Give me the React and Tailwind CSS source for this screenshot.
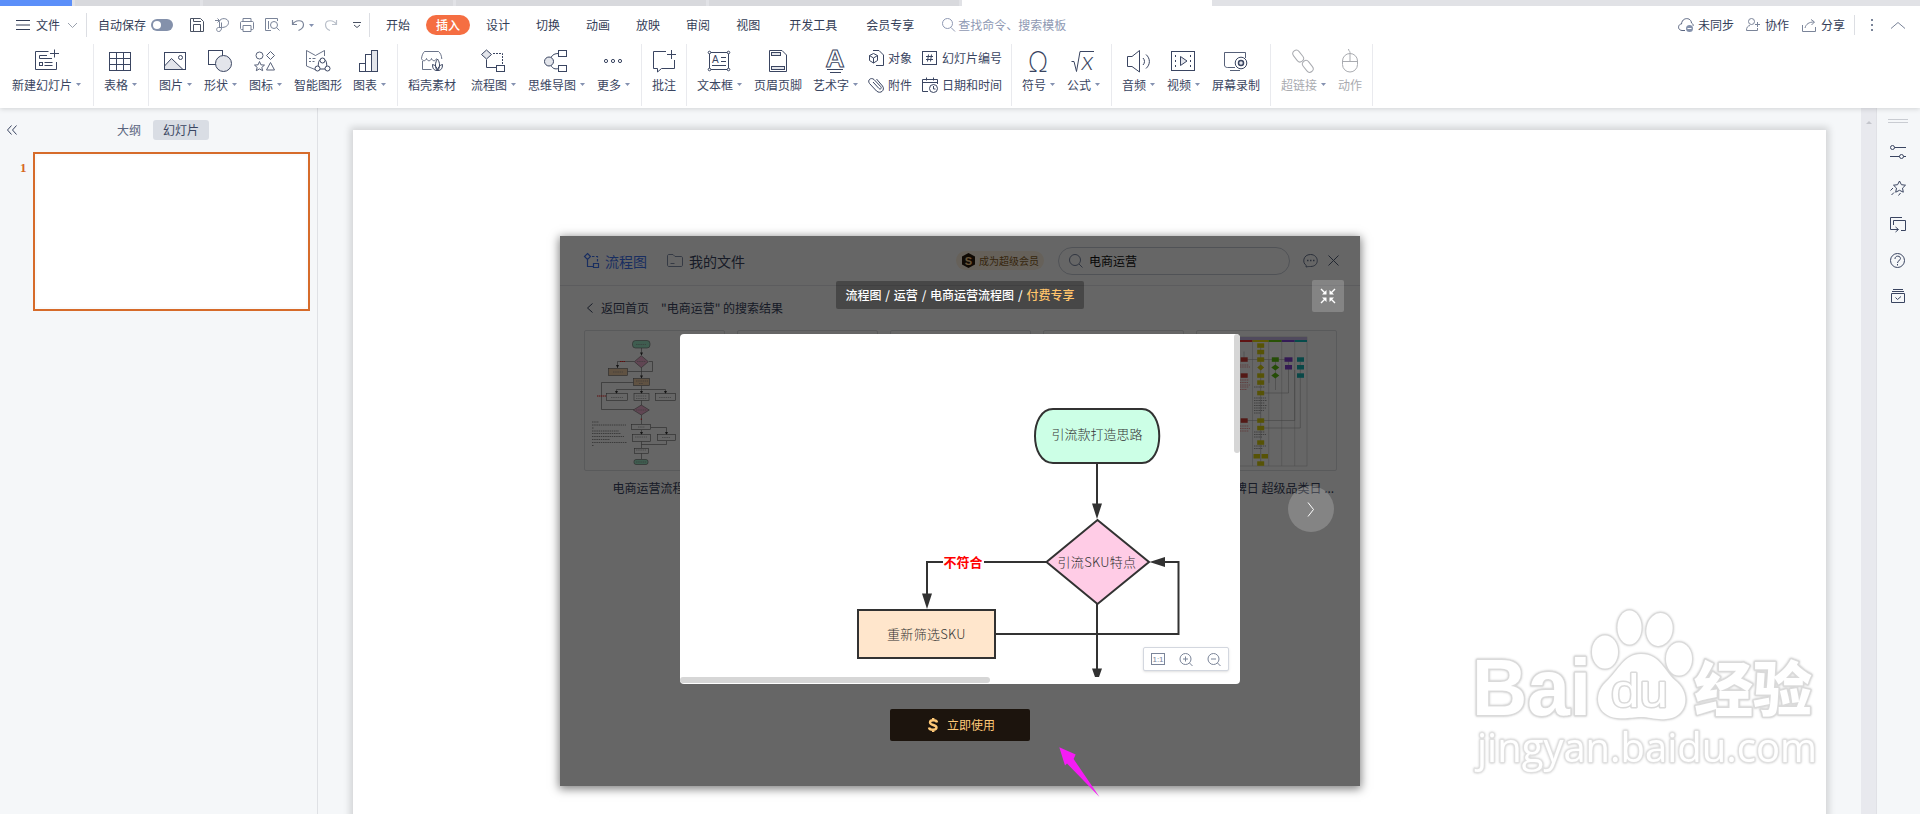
import clsx from "clsx";

const FONT = "font-['Noto_Sans_CJK_SC',sans-serif]";

const Svg = ({ w = 24, h = 24, className, children }) => (
  <svg
    width={w}
    height={h}
    viewBox={`0 0 ${w} ${h}`}
    fill="none"
    stroke="currentColor"
    strokeWidth="1"
    className={clsx("shrink-0 overflow-visible", className)}
  >
    {children}
  </svg>
);

const Caret = ({ className }) => (
  <Svg w={5} h={3} className={clsx("text-[#8491b0]", className)}>
    <path d="M0 0h5L2.500 3z" fill="currentColor" stroke="none" />
  </Svg>
);

const TABS = [
  "w-[72px] bg-[#5b8ff9]",
  "ml-[3px] w-[125px] bg-[#d8d9dd]",
  "ml-[3px] w-[250px] bg-[#d8d9dd]",
  "ml-[3px] w-[250px] bg-[#d8d9dd]",
  "ml-[3px] w-[250px] bg-[#d8d9dd]",
  "ml-[3px] w-[250px] bg-white",
];

const MENUS = [
  { label: "设计", gap: "ml-[16px]" },
  { label: "切换", gap: "ml-[26px]" },
  { label: "动画", gap: "ml-[26px]" },
  { label: "放映", gap: "ml-[26px]" },
  { label: "审阅", gap: "ml-[26px]" },
  { label: "视图", gap: "ml-[26px]" },
  { label: "开发工具", gap: "ml-[29px]" },
  { label: "会员专享", gap: "ml-[29px]" },
];

const SHADE = "#e3e5eb";

const icons = {
  newSlide: (
    <>
      <path d="M14.500 2.500H1.500V20.500H22.500V13M20.500 0.500v8M16 4.500h9M13 6.500H5.500V9.500H18M10.500 13.500h8M10.500 16.500h8" />
      <rect x="5.500" y="13.500" width="3" height="3" />
    </>
  ),
  table: (
    <>
      <rect x="1.500" y="3.500" width="21" height="18" />
      <path d="M1.500 9.500h21M1.500 15.500h21M8.500 3.500v18M15.500 3.500v18" />
    </>
  ),
  image: (
    <>
      <path d="M1.500 17L8.500 9.500L20 20.500H1.500z" fill={SHADE} />
      <rect x="1.500" y="3.500" width="21" height="17" />
      <circle cx="17.500" cy="8.500" r="2" />
    </>
  ),
  shapes: (
    <>
      <rect x="0.500" y="1.500" width="14" height="14" />
      <circle cx="15.500" cy="14.500" r="8" fill={SHADE} />
    </>
  ),
  glyphs: (
    <g opacity=".85">
      <circle cx="6.500" cy="6.500" r="3.500" />
      <path d="M17.500 2.500l4 4-4 4-4-4z" />
      <path d="M6.500 12.500l1.400 3.300 3.600.3-2.700 2.300.9 3.300-3.200-1.800-3.200 1.800.9-3.300-2.700-2.300 3.600-.3z" />
      <path d="M17.500 13.500l4 7.500h-8z" />
    </g>
  ),
  smart: (
    <>
      <path d="M9 20.500L0.500 17V1.500L9.500 6.500L18.500 1.500V7" opacity=".75" />
      <path d="M3 9.500h2M6.500 9.500h3M3 12.500h2M6.500 12.500h2" opacity=".75" />
      <path d="M12.500 18c-.5-4 0-7.500 4-8.500c4 1 4.500 4.500 4 8.500M13.500 20h6" />
      <circle cx="16.500" cy="11.500" r="2.500" fill="white" />
      <circle cx="11.500" cy="19.500" r="2.500" fill="white" />
      <circle cx="21.500" cy="19.500" r="2.500" fill="white" />
    </>
  ),
  chart: (
    <>
      <rect x="2.500" y="14.500" width="6" height="8" />
      <rect x="8.500" y="5.500" width="6" height="17" />
      <rect x="14.500" y="1.500" width="6" height="21" fill={SHADE} />
    </>
  ),
  shop: (
    <>
      <path
        d="M1.500 9.500C2 6 3 4 4.500 2.500H18.500C20.500 4 21.500 6.500 21.800 10M1.500 9.500c1 3 4 3 5 0c1 3 4 3 5 0c1 3 4 3 5 0M2.500 12v8.500h9"
        opacity=".75"
      />
      <path
        d="M17.500 21.500c-3-3-2.500-8 0-11.500c2.500 3.500 3 8.500 0 11.500zM17 21.500c-3 0-4.500-2-4.500-6c2.500.5 4.500 2.500 5 6zM18 21.500c3 0 4.500-2 4.500-6c-2.500.5-4.500 2.500-5 6z"
        fill="white"
      />
    </>
  ),
  flow: (
    <>
      <path d="M5.500 10.500V18.500H15.500" />
      <path d="M5.500 1l5 4.500-5 4.500-5-4.500z" fill={SHADE} />
      <path d="M12 4.500h9.500V16" strokeDasharray="2 1" />
      <rect x="15.500" y="16.500" width="8" height="6" />
    </>
  ),
  mind: (
    <>
      <path d="M7 8.500C8.500 5.500 11 4.500 14.500 4.500M7 16.500C8.500 19.500 11 20.500 14.500 19.500" />
      <circle cx="5" cy="12.500" r="4.500" fill={SHADE} />
      <rect x="14.500" y="1.500" width="8" height="6" />
      <rect x="14.500" y="16.500" width="8" height="6" />
    </>
  ),
  more: (
    <>
      <circle cx="5" cy="12" r="1.600" />
      <circle cx="12" cy="12" r="1.600" />
      <circle cx="19" cy="12" r="1.600" />
    </>
  ),
  comment: (
    <path d="M14 2.500H1.500V19.500H5.500V23L9.500 19.500H22.500V11M19.500 1v9M15 5.500h9" />
  ),
  textBox: (
    <>
      <rect x="2.500" y="3.500" width="19" height="17" />
      <g fill="white">
        <circle cx="2.500" cy="3.500" r="1.300" />
        <circle cx="21.500" cy="3.500" r="1.300" />
        <circle cx="2.500" cy="20.500" r="1.300" />
        <circle cx="21.500" cy="20.500" r="1.300" />
      </g>
      <path d="M14 8.500h5M14 12.500h5M5 16.500h14" />
      <text x="5" y="14" fontSize="10" fill="currentColor" stroke="none" className="font-['Liberation_Sans',sans-serif]">
        A
      </text>
    </>
  ),
  header: (
    <>
      <path d="M3.500 1.500H16L20.500 6V22.500H3.500z" />
      <rect x="5.500" y="3.500" width="9" height="3" fill={SHADE} />
      <rect x="5.500" y="17.500" width="13" height="3" fill={SHADE} />
    </>
  ),
  wordArt: (
    <>
      <text
        x="2.500"
        y="17.500"
        fontSize="23"
        strokeWidth=".9"
        textLength="19"
        lengthAdjust="spacingAndGlyphs"
        className="font-['Liberation_Sans',sans-serif] font-bold"
      >
        A
      </text>
      <path d="M4 20.500h16M7 23.500h11" />
    </>
  ),
  omega: (
    <text
      x="2"
      y="22.500"
      fontSize="29"
      fill="currentColor"
      stroke="none"
      textLength="20"
      lengthAdjust="spacingAndGlyphs"
      className="font-['Lato',sans-serif] font-light"
    >
      Ω
    </text>
  ),
  formula: (
    <>
      <path d="M0.500 12.500H3L5.500 22.500L9 2.500H23" />
      <text
        x="10.500"
        y="21"
        fontSize="25"
        fill="currentColor"
        stroke="none"
        textLength="12"
        lengthAdjust="spacingAndGlyphs"
        className="font-['Lato',sans-serif] font-light italic"
      >
        x
      </text>
    </>
  ),
  audio: (
    <path d="M1.500 7.500H6L13.500 1.500V23L6 17.500H1.500zM17 9c2 2 2 5 0 7M20 5.500c4.500 4 4.500 10 0 14" />
  ),
  video: (
    <>
      <rect x="0.500" y="2.500" width="23" height="19" />
      <path d="M9.500 7.500L16 12L9.500 16.500z" fill={SHADE} />
      <path d="M4.500 6v13M19.500 6v13" strokeDasharray="2 3" />
    </>
  ),
  record: (
    <>
      <path d="M11 18.500H3.500C1.500 18.500 0.500 17.500 0.500 16V3.500H21.500V9M6 21.500h10" opacity=".85" />
      <circle cx="17" cy="14" r="5.800" fill="white" />
      <circle cx="17" cy="14" r="2.500" fill={SHADE} strokeWidth="1.500" />
    </>
  ),
  link: (
    <>
      <rect x="-3" y="-6" width="7" height="13" rx="3.500" transform="translate(6.500 7) rotate(-38)" />
      <rect x="-3.500" y="-6" width="7" height="13" rx="3.500" transform="translate(16.500 17) rotate(-38)" />
    </>
  ),
  mouse: (
    <>
      <rect x="4.500" y="4.500" width="15" height="18.500" rx="7.500" />
      <path d="M4.500 12.500h15M12 12.500V3.500C12 2 10.500 2 10.500 0" />
    </>
  ),
};

// pad = left margin of every button, so the labels keep their uneven rhythm
const GROUPS = [
  { box: "w-[94px]", items: [{ icon: "newSlide", label: "新建幻灯片", caret: true, pad: "ml-[12px]" }] },
  { box: "w-[55px]", items: [{ icon: "table", label: "表格", caret: true, pad: "ml-[10px]" }] },
  {
    box: "w-[249px]",
    items: [
      { icon: "image", label: "图片", caret: true, pad: "ml-[10px]" },
      { icon: "shapes", label: "形状", caret: true, pad: "ml-[13px]" },
      { icon: "glyphs", label: "图标", caret: true, pad: "ml-[13px]" },
      { icon: "smart", label: "智能图形", pad: "ml-[13px]" },
      { icon: "chart", label: "图表", caret: true, pad: "ml-[11px]" },
    ],
  },
  {
    box: "w-[244px]",
    items: [
      { icon: "shop", label: "稻壳素材", pad: "ml-[10px]" },
      { icon: "flow", label: "流程图", caret: true, pad: "ml-[15px]" },
      { icon: "mind", label: "思维导图", caret: true, pad: "ml-[13px]" },
      { icon: "more", label: "更多", caret: true, pad: "ml-[13px]" },
    ],
  },
  { box: "w-[45px]", items: [{ icon: "comment", label: "批注", pad: "ml-[10px]" }] },
];

const GROUPS_TEXT = [
  { icon: "textBox", label: "文本框", caret: true, pad: "ml-[10px]" },
  { icon: "header", label: "页眉页脚", pad: "ml-[13px]" },
  { icon: "wordArt", label: "艺术字", caret: true, pad: "ml-[11px]" },
];

const GROUPS_RIGHT = [
  {
    box: "w-[100px]",
    items: [
      { icon: "omega", label: "符号", caret: true, pad: "ml-[10px]" },
      { icon: "formula", label: "公式", caret: true, pad: "ml-[13px]" },
    ],
  },
  {
    box: "w-[159px]",
    items: [
      { icon: "audio", label: "音频", caret: true, pad: "ml-[10px]" },
      { icon: "video", label: "视频", caret: true, pad: "ml-[13px]" },
      { icon: "record", label: "屏幕录制", pad: "ml-[13px]" },
    ],
  },
  {
    box: "w-[102px]",
    items: [
      { icon: "link", label: "超链接", caret: true, pad: "ml-[10px]", off: true },
      { icon: "mouse", label: "动作", pad: "ml-[13px]", off: true },
    ],
  },
];

const RibbonItem = ({ item }) => (
  <button
    className={clsx(
      "flex shrink-0 flex-col items-center",
      item.pad,
      item.off ? "text-[#a9abb0]" : "text-[#3a4561]",
    )}
  >
    <Svg>{icons[item.icon]}</Svg>
    <span className="mt-[3px] flex items-center whitespace-nowrap leading-[18px]">
      {item.label}
      {item.caret && <Caret className="-mr-px mb-[2px] ml-[4px]" />}
    </span>
  </button>
);

const RibbonGroup = ({ box, children }) => (
  <div className={clsx("flex h-[62px] shrink-0 border-r border-[#e9eaee] pt-[5px]", box)}>
    {children}
  </div>
);

const SmallItem = ({ icon, label }) => (
  <span className="flex items-center gap-[4px] whitespace-nowrap leading-[18px]">
    <Svg w={16} h={16}>{icon}</Svg>
    {label}
  </span>
);

const Ribbon = () => (
  <div className="flex h-[64px] items-start text-[12px] text-[#3a4561]">
    {GROUPS.map((g, i) => (
      <RibbonGroup key={i} box={g.box}>
        {g.items.map((it) => (
          <RibbonItem key={it.label} item={it} />
        ))}
      </RibbonGroup>
    ))}
    <RibbonGroup box="w-[325px]">
      {GROUPS_TEXT.map((it) => (
        <RibbonItem key={it.label} item={it} />
      ))}
      <div className="ml-[11px] grid h-[45px] grid-cols-[54px_auto] content-between">
        <SmallItem
          label="对象"
          icon={
            <>
              <path d="M5 0.500H11L15.500 5V15.500H8" />
              <path d="M5.500 3.500l4 2v5l-4 2.500-4-2.500v-5zM1.500 5.500l4 2.500 4-2.500M5.500 8v5" />
            </>
          }
        />
        <SmallItem
          label="幻灯片编号"
          icon={
            <>
              <rect x="0.500" y="1.500" width="14" height="13" />
              <path d="M6.500 4.500l-1 7M9.500 4.500l-1 7M4 6.500h7M4 9.500h7" />
            </>
          }
        />
        <SmallItem
          label="附件"
          icon={
            <path d="M5 5l6 6.500c1.500 1.500 3-.5 1.800-1.800L6 2.500C3 0 -1 3 1.500 6.500l7 7.500c4 3.500 9-1 6-5L8.500 2" />
          }
        />
        <SmallItem
          label="日期和时间"
          icon={
            <>
              <path d="M6 14.500H0.500V2.500H15.500V7M0.500 5.500h15M4.500 0.500v3M11.500 0.500v3" />
              <circle cx="11.500" cy="11.500" r="4" />
              <path d="M11.500 9v3h2" />
            </>
          }
        />
      </div>
    </RibbonGroup>
    {GROUPS_RIGHT.map((g, i) => (
      <RibbonGroup key={i} box={g.box}>
        {g.items.map((it) => (
          <RibbonItem key={it.label} item={it} />
        ))}
      </RibbonGroup>
    ))}
  </div>
);

const MenuBar = () => (
  <div className="flex h-[38px] items-center whitespace-nowrap text-[12px] leading-[18px] text-[#333d57]">
    <Svg w={14} h={10} className="ml-[16px]">
      <path d="M0 .5h14M0 5h14M0 9.500h14" />
    </Svg>
    <span className="ml-[6px]">文件</span>
    <Svg w={9} h={5} className="ml-[8px] text-[#9aa1ad]">
      <path d="M0 0l4.500 4.500L9 0" />
    </Svg>
    <span className="ml-[9px] h-[24px] w-px bg-[#dcdee3]" />
    <span className="ml-[11px]">自动保存</span>
    <span className="ml-[5px] flex h-[12px] w-[22px] items-center rounded-full bg-[#8491ab] pl-[2px]">
      <span className="h-[8px] w-[8px] rounded-full bg-white" />
    </span>
    <Svg w={14} h={14} className="ml-[17px] text-[#4a5263]">
      <path d="M0.500 0.500H10.500L13.500 3.500V13.500H0.500zM3.500 13.500V6.500H10.500V13.500M3.500 0.500V3.500H11" />
    </Svg>
    <Svg w={14} h={14} className="ml-[11px] text-[#7a8499]">
      <path d="M0 2.500h4.500M2.500 .5l2 2-2 2M4.500 9.500V3.500C5 -.5 13.500 -.5 13.500 4.500C13.500 8 10 9.500 6.500 9.500H3.500c-2.500 0-2.500 4 0 4s3-2 3-4V4.500" />
    </Svg>
    <Svg w={14} h={14} className="ml-[11px] text-[#7a8499]">
      <path d="M3 3.500V0.500h8v3M3 11.500H1.500c-1 0-1-1-1-1V4.500c0-1 1-1 1-1h11c1 0 1 1 1 1v6c0 1-1 1-1 1H11M3 7.500h8v6H3z" />
    </Svg>
    <Svg w={15} h={14} className="ml-[11px] text-[#7a8499]">
      <path d="M6 12.500H0.500V0.500H12.500V3M3.500 3v8" />
      <circle cx="9" cy="7" r="3.500" />
      <path d="M11.500 9.500l3 3" />
    </Svg>
    <Svg w={12} h={12} className="ml-[12px] text-[#7a8499]">
      <path d="M0.500 1v4.500H5M0.500 5.500C3 1 11 0 11.500 5.500C11.500 8.500 9 10.500 6.500 11.500" strokeWidth="1.200" />
    </Svg>
    <Caret className="ml-[5px]" />
    <Svg w={12} h={12} className="ml-[11px] text-[#b9bfc9]">
      <path d="M11.500 1v4.500H7M11.500 5.500C9 1 1 0 .5 5.500C.5 8.500 2 10.500 5 11.500" strokeWidth="1.200" />
    </Svg>
    <Svg w={8} h={6} className="ml-[16px] text-[#4a5263]">
      <path d="M0 .5h8M1 3l3 2.500L7 3" />
    </Svg>
    <span className="ml-[8px] h-[24px] w-px bg-[#dcdee3]" />
    <span className="ml-[16px]">开始</span>
    <span className="ml-[16px] flex h-[20px] w-[44px] items-center justify-center rounded-full bg-[#f56e42] font-medium text-white">
      插入
    </span>
    {MENUS.map((m) => (
      <span key={m.label} className={m.gap}>
        {m.label}
      </span>
    ))}
    <Svg w={14} h={14} className="ml-[28px] text-[#8f99b3]">
      <circle cx="5.500" cy="5.500" r="5" />
      <path d="M9 9.500l4 4" />
    </Svg>
    <span className="ml-[2px] text-[#8f99b3]">查找命令、搜索模板</span>
    <div className="ml-auto flex items-center">
      <Svg w={16} h={14} className="text-[#5a6580]">
        <path d="M7 12.500H4C-1 12 0 6 3.500 6C4 -1 13 -1 13.500 5C15 6 15.500 7 15 8" />
        <circle cx="11.500" cy="10.500" r="3.500" fill="#8491ab" stroke="none" />
        <path d="M9.500 10.500h4" stroke="white" />
      </Svg>
      <span className="ml-[4px]">未同步</span>
      <Svg w={14} h={14} className="ml-[12px] text-[#7a8499]">
        <circle cx="5.500" cy="3.500" r="3" />
        <path d="M4 7.500C1.500 8 .5 9.500 .5 12.500H11.500V10M9 6.500h5M11.500 4v5" />
      </Svg>
      <span className="ml-[5px]">协作</span>
      <Svg w={14} h={13} className="ml-[13px] text-[#7a8499]">
        <path d="M0.500 6V12.500H13.500V8M3 9C4 5 7 3 12 3M9 0.500L12.500 3L9.500 6" />
      </Svg>
      <span className="ml-[5px]">分享</span>
      <span className="ml-[9px] h-[20px] w-px bg-[#dcdee3]" />
      <Svg w={2} h={12} className="ml-[16px] text-[#7a8499]">
        <path d="M1 0v12" strokeWidth="2" strokeDasharray="2 3" />
      </Svg>
      <Svg w={14} h={7} className="ml-[18px] mr-[15px] text-[#7a8499]">
        <path d="M0 6.500l7-6 7 6" />
      </Svg>
    </div>
  </div>
);

const SlidePanel = () => (
  <aside className="flex w-[318px] shrink-0 flex-col border-r border-[#dfe1e5] bg-[#f5f7f9]">
    <div className="mt-[12px] flex h-[20px] items-center text-[12px] leading-[18px] text-[#3a4561]">
      <Svg w={10} h={10} className="ml-[7px]">
        <path d="M4.500 .5L.5 5l4 4.500M9.500 .5L5.500 5l4 4.500" />
      </Svg>
      <span className="ml-[100px] text-[#5a6580]">大纲</span>
      <span className="ml-[12px] flex h-[20px] w-[56px] items-center justify-center rounded-[3px] bg-[#d9dde4]">
        幻灯片
      </span>
    </div>
    <div className="mt-[12px] flex">
      <span className="mt-[8px] w-[33px] pl-[20px] font-['Liberation_Serif',serif] text-[13px] font-bold leading-[16px] text-[#d6681e]">
        1
      </span>
      <div className="h-[159px] w-[277px] border-2 border-[#d66b2a] bg-[#fafbfc] p-[2px]">
        <div className="h-full w-full bg-white" />
      </div>
    </div>
  </aside>
);

const FlowThumb = () => (
  <svg width="139" height="139" viewBox="1 1 139 139" fill="none" stroke="#666" strokeWidth=".6">
    <path d="M57.500 18v7M57.500 37v11M57.500 56v8M57.500 70v6M57.500 85v9M57.500 100v5M57.500 111v7M57.500 123v6M50 31.500H33.500V38M43.500 41.500H68.500V31.500H65M49.500 52.500H17.500V79.500H50M32.500 64V59.500H81.500V64M67 97.500h15.500v7M82.500 111v3.500H57.500" />
    <path d="M56 22.500h3l-1.500 3zM56 45.500h3l-1.500 3zM56 61h3l-1.500 3zM31 61h3l-1.500 3zM80 61h3l-1.500 3zM32 35h3l-1.500 3zM56 102h3l-1.500 3zM81 102h3l-1.500 3z" fill="#333" stroke="none" />
    <rect x="48.500" y="10.500" width="17.500" height="7.500" rx="3" fill="#9fe8c8" />
    <path d="M57.300 25.700l7 6-7 6-7-6z" fill="#f0b0d0" />
    <rect x="24.500" y="38.500" width="19" height="7" fill="#f0cca5" />
    <rect x="49.500" y="48.500" width="16" height="7" fill="#f0cca5" />
    <g fill="white">
      <rect x="22.500" y="63.500" width="21" height="7" />
      <rect x="50" y="63.500" width="15" height="7" />
      <rect x="71.500" y="63.500" width="20" height="7" />
      <rect x="47.500" y="94.500" width="19" height="5" />
      <rect x="48.500" y="104.500" width="18" height="7" />
      <rect x="73.500" y="104.500" width="18" height="6" />
      <rect x="50.500" y="118.500" width="14" height="5" />
    </g>
    <path d="M57.300 75l8 5-8 5-8-5z" fill="#f0b0d0" />
    <rect x="50" y="129.500" width="14" height="5" rx="2" fill="#9fe8c8" />
    <path d="M36 31.500h5M13 66h9M57.300 88.500v2" stroke="#e22" strokeWidth="1" strokeDasharray="1.500 .5" />
    <g strokeDasharray="1.500 .7" stroke="#888">
      <path d="M52 14.500h10M53 31.500h9M29 42h10M52 51h12M55 53.500h4M27 67.500h12M52 66h11M52 68.500h11M75 67.500h12M52 80h11M54 97h7M51 107h12M78 107.500h8M52 120h10M52 132h10" />
      <path d="M8 92h7M8 95h34M8 98h2M8 101h27M8 103.500h29M8 106.500h32M8 109.500h18M8 112.500h35M8 115.500h2" strokeWidth=".9" />
    </g>
  </svg>
);

const SWIM_YELLOW = [15.5, 22, 29.5, 45.5, 52.5, 63, 90.5, 98, 112.5, 133.5];

const SwimThumb = () => (
  <svg width="139" height="139" viewBox="1 1 139 139" fill="none" stroke="#bbb" strokeWidth=".5">
    <rect x="30" y="7" width="81" height="129" />
    <path d="M56.500 10v126M72.700 10v126M85.700 10v126M98.700 10v126" />
    <path
      d="M64.700 15v118M48 29.500h16M64.700 29.500h30M48 21.500v8M79.500 30v30M92.500 30v33H65M104.300 32v66H65M98.700 40v50.500H50M73 53V30"
      stroke="#999"
    />
    <g stroke="none">
      <rect x="30" y="7" width="81" height="3" fill="#c9b8e8" />
      <rect x="30" y="10" width="26.500" height="2" fill="#e33" />
      <rect x="56.500" y="10" width="16.200" height="2" fill="#e8dc10" />
      <rect x="72.700" y="10" width="13" height="2" fill="#6c1" />
      <rect x="85.700" y="10" width="13" height="2" fill="#8344d8" />
      <rect x="98.700" y="10" width="12.300" height="2" fill="#1bb" />
      <g fill="#d9d010">
        {SWIM_YELLOW.map((y) => (
          <rect key={y} x="61.200" y={y - 2.2} width="7" height="4.500" />
        ))}
        <path d="M64.700 34.500l3.500 3-3.500 3-3.500-3z" />
        <rect x="57.500" y="124" width="6.500" height="4.500" />
        <rect x="65.500" y="124" width="6.500" height="4.500" />
      </g>
      <g fill="#cf3f38">
        <rect x="44.700" y="27.300" width="7" height="4.500" />
        <rect x="44.700" y="43.300" width="7" height="4.500" />
        <rect x="44.700" y="88.300" width="7" height="4.500" />
      </g>
      <g fill="#5cc010">
        <rect x="75.800" y="27.300" width="7" height="4.500" />
        <path d="M79.300 34.500l4 3-4 3-4-3zM79.300 42.500l4 3-4 3-4-3z" />
      </g>
      <g fill="#7f3fd0">
        <rect x="88.500" y="27.300" width="8" height="4.500" />
        <rect x="89" y="35" width="7" height="4.500" />
      </g>
      <g fill="#18b4b4">
        <rect x="101" y="27.300" width="7" height="4.500" />
        <rect x="101" y="35" width="7" height="4.500" />
        <rect x="101" y="43.300" width="7" height="4.500" />
      </g>
    </g>
    <g strokeWidth=".8" strokeDasharray="1.500 .7">
      <path d="M44 35h9M44 37h10M44 50h9M44 52.500h8M44 55h10M44 57h9M44 59.500h7M44 96h9M44 98.500h10M44 101h9" stroke="#e88" />
      <path
        d="M58 57h11M58 68h12M58 70.500h13M58 73h11M58 75.500h13M58 78h12M58 80.500h10M58 83h7M58 102h11M58 104.500h12M58 107h8M58 116h12M58 118.500h9"
        stroke="#888"
      />
    </g>
  </svg>
);

const LIBRARY = [
  { title: "电商运营流程图", thumb: <FlowThumb /> },
  { title: "" },
  { title: "" },
  { title: "" },
  { title: "超级品牌日 超级品类日 ...", thumb: <SwimThumb /> },
];

const Library = () => (
  <div className="flex h-full flex-col bg-white text-[12px] leading-[18px] text-[#3a4561]">
    <div className="flex h-[50px] items-center border-b border-[#e6e7ea] whitespace-nowrap">
      <Svg w={15} h={15} className="ml-[24px] text-[#3f73f0]">
        <path d="M3.500 .5l3 3-3 3-3-3zM3.500 6.500V13.500H9.500M9.500 10.500h5v4h-5z" strokeWidth="1.200" />
        <path d="M8 3.500h5.500V9" strokeWidth="1.200" strokeDasharray="2.500 1.500" />
      </Svg>
      <span className="ml-[6px] text-[14px] text-[#3f73f0]">流程图</span>
      <Svg w={16} h={13} className="ml-[20px] text-[#8491ab]">
        <path d="M0.500 2c0-1 .5-1.500 1.500-1.500H6L8 2.500H14c1 0 1.500.5 1.500 1.500v7c0 1-.5 1.500-1.500 1.500H2c-1 0-1.500-.5-1.500-1.500zM3.500 9.500h4" />
      </Svg>
      <span className="ml-[6px] text-[14px]">我的文件</span>
      <span className="ml-[211px] flex h-[19px] w-[88px] items-center rounded-full bg-[#fff3e0] pl-[6px] text-[10px] text-[#8a5f28]">
        <svg width="13" height="15" viewBox="0 0 13 15">
          <path d="M6.500 0L13 3.500v8L6.500 15 0 11.500v-8z" fill="#2a1a0c" />
          <text
            x="6.500"
            y="11.500"
            textAnchor="middle"
            fontSize="11"
            fill="#ffcf8a"
            className="font-['Liberation_Sans',sans-serif] font-bold"
          >
            S
          </text>
        </svg>
        <span className="ml-[4px]">成为超级会员</span>
      </span>
      <span className="ml-[14px] flex h-[28px] w-[232px] items-center rounded-full border border-[#c9ced8] pl-[10px] text-[#111]">
        <Svg w={14} h={14} className="text-[#7885a0]">
          <circle cx="6" cy="6" r="5.500" />
          <path d="M10 10l3.500 3.500" />
        </Svg>
        <span className="ml-[6px]">电商运营</span>
      </span>
      <Svg w={15} h={14} className="ml-[13px] text-[#6a7690]">
        <path d="M3 13L3.300 11.500C-1 9 0 .5 7.500 .5C16 .5 17 12.500 7.500 12.500C6 12.500 5 12.500 3 13z" />
        <path d="M4 6.500h8" strokeWidth="1.500" strokeDasharray="1.500 1.500" />
      </Svg>
      <Svg w={11} h={11} className="ml-[10px] text-[#55617a]">
        <path d="M.5 .5l10 10M10.500 .5l-10 10" />
      </Svg>
    </div>
    <div className="mt-[13px] flex items-center pl-[27px]">
      <Svg w={6} h={10}>
        <path d="M5.500 .5L.5 5l5 4.500" />
      </Svg>
      <span className="ml-[8px]">返回首页</span>
      <span className="ml-[12px]">"电商运营" 的搜索结果</span>
    </div>
    <div className="ml-[24px] mt-[13px] grid grid-cols-[repeat(5,141px)] gap-[12px]">
      {LIBRARY.map((doc, i) => (
        <div key={i} className="flex flex-col items-center">
          <div className="h-[141px] w-[141px] rounded-[2px] border border-[#dfe0e4]">{doc.thumb}</div>
          <span className="mt-[8px] whitespace-nowrap">{doc.title}</span>
        </div>
      ))}
    </div>
  </div>
);

// Origin is the top left corner of the preview card
const Diagram = () => (
  <svg
    width="554"
    height="343"
    viewBox="0 0 554 343"
    className="font-['Noto_Sans_CJK_SC',sans-serif]"
    fill="none"
    stroke="#323232"
    strokeWidth="2"
  >
    <path d="M417 129v42M417 270v73M366 228H247V262M315 300H498.500V228H482" />
    <g fill="#323232" stroke="none">
      <path d="M412 169.500h10l-5 15.500zM242 259.500h10l-5 15.500zM485 223v10l-15.500-5zM412 334.500h10l-3 8.500h-4z" />
    </g>
    <path d="M373 75H462C485 75 485 129 462 129H373C349 129 349 75 373 75z" fill="#ccffe6" />
    <path d="M417.500 186L469 228L417.500 270L366.500 228z" fill="#ffcce6" />
    <rect x="178" y="276" width="137" height="48" fill="#ffe6cc" />
    <rect x="263" y="220" width="41" height="16" fill="white" stroke="none" />
    <g stroke="none" fill="#323232" fontSize="13">
      <text x="371.500" y="105" className="font-light">引流款打造思路</text>
      <text x="377.500" y="233" textLength="78.500" className="font-light">引流SKU特点</text>
      <text x="207" y="305" textLength="78.500" className="font-light">重新筛选SKU</text>
      <text x="263.500" y="233" fill="#ff0000" className="font-bold">不符合</text>
    </g>
  </svg>
);

const Preview = () => (
  <div className="absolute inset-0 flex flex-col items-center bg-black/60 text-[12px] leading-[18px]">
    <div className="mt-[45px] flex h-[28px] w-[248px] shrink-0 items-center justify-center whitespace-pre rounded-[2px] bg-black/30 font-medium text-white [word-spacing:1.1px]">
      流程图 / 运营 / 电商运营流程图 / <span className="text-[#ffc46b]">付费专享</span>
    </div>
    <div className="relative mt-[25px] h-[350px] w-[560px] shrink-0 overflow-hidden rounded-[4px] bg-white">
      <Diagram />
      <div className="absolute right-0 top-0 h-[119px] w-[6px] rounded-full bg-[#d6d6d6]" />
      <div className="absolute bottom-[1px] left-0 h-[6px] w-[310px] rounded-full bg-[#d6d6d6]" />
      <div className="absolute bottom-[13px] right-[11px] flex h-[24px] w-[86px] items-center justify-between rounded-[2px] border border-[#d3d7df] bg-white px-[7px] text-[#7b8599] shadow-sm">
        <Svg w={14} h={12}>
          <rect x="0.500" y="0.500" width="13" height="11" />
          <text
            x="7"
            y="8.800"
            textAnchor="middle"
            fontSize="8"
            fill="currentColor"
            stroke="none"
            className="font-['Liberation_Sans',sans-serif]"
          >
            1:1
          </text>
        </Svg>
        <Svg w={14} h={13}>
          <circle cx="6.500" cy="6" r="5.500" />
          <path d="M10.500 10l3 3M4 6h5M6.500 3.500v5" />
        </Svg>
        <Svg w={14} h={13}>
          <circle cx="6.500" cy="6" r="5.500" />
          <path d="M10.500 10l3 3M4 6h5" />
        </Svg>
      </div>
    </div>
    <button className="mt-[25px] flex h-[32px] w-[140px] shrink-0 items-center rounded-[2px] bg-[#1c140d] pl-[38px] text-[#ffc978]">
      <Svg w={10} h={14}>
        <path
          d="M9 4.500C8.500 1.500 2 1.500 2 4.500S8.500 6.500 8.500 9.500S1.500 12.500 1 9.500M5.200 0v2.500M5.200 11.500V14"
          strokeWidth="2.400"
        />
      </Svg>
      <span className="ml-[9px]">立即使用</span>
    </button>

    <button className="absolute right-[16px] top-[44px] flex h-[32px] w-[32px] items-center justify-center rounded-[2px] bg-white/20 text-white">
      <Svg w={14} h={14}>
        <path d="M0 0l4 4M14 0l-4 4M0 14l4-4M14 14l-4-4" strokeWidth="1.400" />
        <path
          d="M5.500 1v4.500H1zM8.500 1v4.500H13zM5.500 13V8.500H1zM8.500 13V8.500H13z"
          fill="currentColor"
          stroke="none"
        />
      </Svg>
    </button>
    <button className="absolute right-[26px] top-[250px] flex h-[46px] w-[46px] items-center justify-center rounded-full bg-white/20 text-white">
      <Svg w={6} h={15}>
        <path d="M0 .5l5.500 7-5.500 7" />
      </Svg>
    </button>
  </div>
);

const Watermark = () => (
  <svg
    width="360"
    height="180"
    viewBox="1466 600 360 180"
    className="absolute left-[1113px] top-[470px] drop-shadow-[0_0_1px_rgba(0,0,0,0.2)] [paint-order:stroke]"
    fill="white"
    stroke="#dadada"
    strokeWidth="3"
    strokeLinejoin="round"
  >
    <text
      x="1472"
      y="715"
      fontSize="79"
      textLength="119"
      lengthAdjust="spacingAndGlyphs"
      className="font-['Liberation_Sans',sans-serif] font-bold"
    >
      Bai
    </text>
    <g strokeWidth="2.500">
      <ellipse cx="1605" cy="652" rx="13" ry="16.500" />
      <ellipse cx="1629.500" cy="627.500" rx="12" ry="17" />
      <ellipse cx="1659.500" cy="629.500" rx="13" ry="16.500" transform="rotate(10 1659.500 629.500)" />
      <ellipse cx="1679" cy="659" rx="13" ry="16.500" />
      <path d="M1641 654C1661 654 1664 672 1677 682C1692 696 1686 718 1666 719C1655 720 1650 717 1641 717C1632 717 1628 719 1617 718C1597 716 1592 695 1606 682C1619 670 1624 654 1641 654z" />
    </g>
    <text
      x="1611"
      y="707"
      fontSize="47"
      textLength="57"
      lengthAdjust="spacingAndGlyphs"
      className="font-['Liberation_Sans',sans-serif]"
    >
      du
    </text>
    <text
      x="1694"
      y="711"
      fontSize="59"
      textLength="118"
      lengthAdjust="spacingAndGlyphs"
      className="font-['Noto_Sans_CJK_SC',sans-serif] font-black"
    >
      经验
    </text>
    <text
      x="1477"
      y="762"
      fontSize="41"
      textLength="340"
      lengthAdjust="spacingAndGlyphs"
      strokeWidth="2.500"
      stroke="#e0e0e0"
      className="font-['Open_Sans',sans-serif]"
    >
      jingyan.baidu.com
    </text>
  </svg>
);

const SideTools = () => (
  <aside className="flex w-[43px] shrink-0 flex-col items-center bg-[#f5f7f9] pr-[1px] text-[#3a4561]">
    <Svg w={20} h={4} className="mt-[11px] text-[#c9ccd2]">
      <path d="M0 .5h20M0 3.500h20" />
    </Svg>
    <Svg w={16} h={16} className="mt-[21px]">
      <circle cx="2.500" cy="3.500" r="2" />
      <circle cx="11.500" cy="12.500" r="2" />
      <path d="M4.500 3.500H16M0 12.500h9.500M13.500 12.500H16" />
    </Svg>
    <Svg w={16} h={16} className="mt-[20px]">
      <path d="M9.500 1l1.900 3.700 4.100.5-3 2.900.8 4.100-3.800-1.900-3.800 1.900.8-4.100-3-2.900 4.100-.5zM3 8L.5 10.500M4 12.500l-2.500 2.500M10.500 13L8.500 15.500" />
    </Svg>
    <Svg w={16} h={16} className="mt-[20px]">
      <path d="M12 1.500H.5V13.500H8M5.500 11l3 2.500-3 2.500M3.500 9V4.500H15.500V14.500H11" />
    </Svg>
    <Svg w={16} h={16} className="mt-[20px]">
      <circle cx="7.500" cy="8.500" r="7" />
      <path d="M5 7C5 3 10.500 3.500 10.500 6.500C10.500 8.500 7.500 8.500 7.500 11M7.500 12v1.500" />
    </Svg>
    <Svg w={16} h={16} className="mt-[20px]">
      <path d="M3 1.500h10M2 3.500h12M1.500 5.500h13v9h-13zM5.500 9.500l2 2 3.500-3" />
    </Svg>
  </aside>
);

const App = () => (
  <div className={clsx("flex h-[814px] w-[1920px] flex-col overflow-hidden bg-[#f5f7f9]", FONT)}>
    <header className="relative z-10 h-[108px] shrink-0 bg-white shadow-[0_1px_5px_rgba(0,0,0,0.15)]">
      <div className="flex h-[6px] bg-[#e1e2e6]">
        {TABS.map((t, i) => (
          <div key={i} className={t} />
        ))}
      </div>
      <MenuBar />
      <Ribbon />
    </header>

    <div className="flex min-h-0 flex-1">
      <SlidePanel />

      {/* slide canvas */}
      <main className="flex-1 overflow-hidden pl-[35px] pr-[35px] pt-[22px]">
        <div className="relative h-[720px] w-[1473px] bg-white shadow-[0_0_7px_3px_rgba(0,0,0,0.14)]">
          <div className="absolute left-[207px] top-[106px] h-[550px] w-[800px] shadow-[0_2px_9px_1px_rgba(0,0,0,0.5)]">
            <Library />
            <Preview />
          </div>
          <Watermark />
          <svg width="42" height="52" viewBox="1058 746 42 52" className="absolute left-[705px] top-[616px]">
            <path
              d="M1059.300 747.300L1075.700 754.500L1073.600 759L1099.500 797L1067 763.500L1065 765.500z"
              fill="#f41cf4"
            />
          </svg>
        </div>
      </main>

      <div className="flex w-[16px] shrink-0 justify-center border-r border-[#e0e1e6] bg-[#e8e9ee] pt-[13px]">
        <Svg w={6} h={3} className="text-[#c4c6cc]">
          <path d="M0 3L3 0l3 3z" fill="currentColor" stroke="none" />
        </Svg>
      </div>
      <SideTools />
    </div>
  </div>
);

export default App;
